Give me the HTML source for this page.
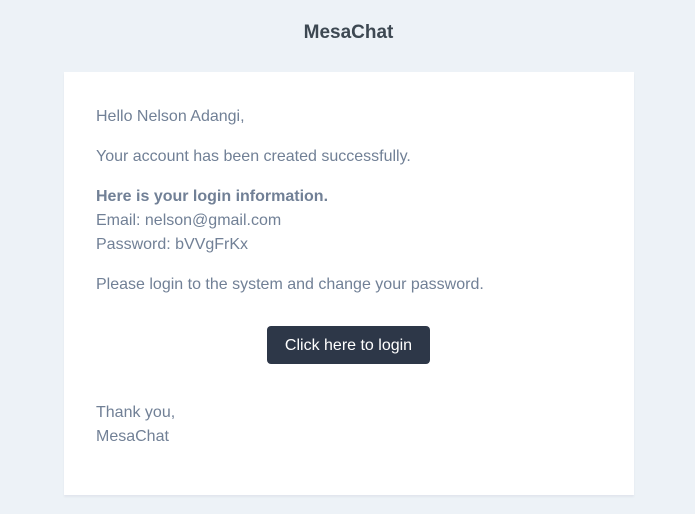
<!DOCTYPE html>
<html><head><style>
body{margin:0;background:#edf2f7;font-family:"Liberation Sans",sans-serif;width:695px;height:514px;overflow:hidden;position:relative}
.h{position:absolute;top:22px;left:1px;width:695px;text-align:center;font-weight:bold;font-size:19px;color:#3d4852}
.card{position:absolute;left:64px;top:72px;width:570px;height:423px;background:#fff;box-shadow:0 2px 2px rgba(0,0,50,.05)}
p{position:absolute;left:32px;margin:0;font-size:16px;line-height:24px;color:#718096}
.btn{position:absolute;left:203px;top:254px;width:163px;height:38px;background:#2d3748;border-radius:4px;color:#fff;font-size:16px;line-height:40px;text-align:center}
</style></head><body>
<div class="h">MesaChat</div>
<div class="card">
<p style="top:33px">Hello Nelson Adangi,</p>
<p style="top:73px">Your account has been created successfully.</p>
<p style="top:113px"><b>Here is your login information.</b><br>Email: nelson@gmail.com<br>Password: bVVgFrKx</p>
<p style="top:201px">Please login to the system and change your password.</p>
<div class="btn">Click here to login</div>
<p style="top:329px">Thank you,<br>MesaChat</p>
</div>
</body></html>
